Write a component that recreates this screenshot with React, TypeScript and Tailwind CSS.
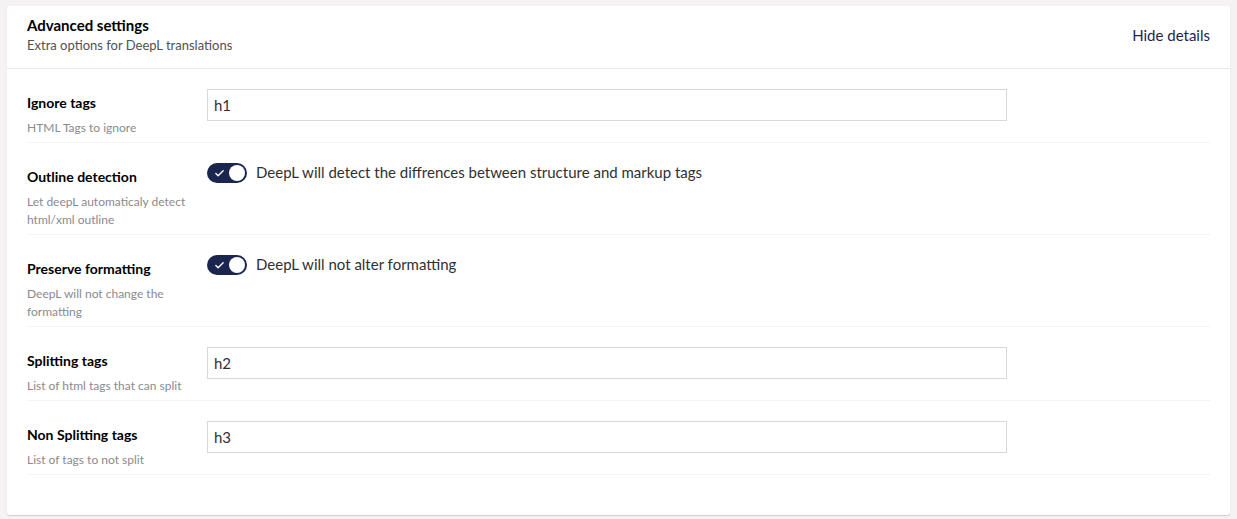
import { Check } from 'lucide-react';

type Row =
  | { label: string; desc: string; kind: 'input'; value: string }
  | { label: string; desc: string; kind: 'toggle'; text: string };

const rows: Row[] = [
  { label: 'Ignore tags', desc: 'HTML Tags to ignore', kind: 'input', value: 'h1' },
  {
    label: 'Outline detection',
    desc: 'Let deepL automaticaly detect html/xml outline',
    kind: 'toggle',
    text: 'DeepL will detect the diffrences between structure and markup tags',
  },
  {
    label: 'Preserve formatting',
    desc: 'DeepL will not change the formatting',
    kind: 'toggle',
    text: 'DeepL will not alter formatting',
  },
  { label: 'Splitting tags', desc: 'List of html tags that can split', kind: 'input', value: 'h2' },
  { label: 'Non Splitting tags', desc: 'List of tags to not split', kind: 'input', value: 'h3' },
];

function Toggle({ text }: { text: string }) {
  return (
    <div className="flex items-start gap-[9px]">
      <div className="relative h-[20px] w-[40px] shrink-0 rounded-full bg-[#1b264f]">
        <Check size={11} strokeWidth={3} className="absolute left-[7px] top-[4.5px] text-white" />
        <div className="absolute right-[2px] top-[2px] h-[16px] w-[16px] rounded-full bg-white" />
      </div>
      <span className="text-[15px] leading-[18px] text-[#303033]">{text}</span>
    </div>
  );
}

export default function App() {
  return (
    <div
      className="min-h-[519px] w-full bg-[#f4f2f2] pl-[7px] pr-[7px] pt-[6px] pb-[4px]"
      style={{ fontFamily: 'Lato, "Open Sans", sans-serif' }}
    >
      <div className="rounded-[3px] bg-white shadow-[0_1px_1px_rgba(0,0,0,0.16)] pb-[40px]">
        {/* Header */}
        <div className="flex items-center justify-between border-b border-[#e9e9eb] px-5 pt-[9px] pb-[13px]">
          <div>
            <div className="text-[15px] font-bold leading-[20px] text-[#000000]">Advanced settings</div>
            <div className="text-[13px] leading-[20px] text-[#515054]">Extra options for DeepL translations</div>
          </div>
          <div className="text-[15px] text-[#1b264f]">Hide details</div>
        </div>

        {/* Rows */}
        <div className="px-5">
          {rows.map((row) => (
            <div key={row.label} className="flex border-b border-[#f3f3f5] pt-5 pb-[5px]">
              <div className="w-[180px] shrink-0 pr-5 pt-1">
                <div className="text-[14px] font-bold leading-[20px] text-[#000000]">{row.label}</div>
                <div className="mt-[6px] text-[12px] leading-[18px] text-[#8a8a8e]">{row.desc}</div>
              </div>
              <div className="flex-1">
                {row.kind === 'input' ? (
                  <input
                    readOnly
                    value={row.value}
                    className="h-[32px] w-[800px] border border-[#d8d7d9] px-[6px] text-[15px] text-[#303033] outline-none"
                  />
                ) : (
                  <Toggle text={row.text} />
                )}
              </div>
            </div>
          ))}
        </div>
      </div>
    </div>
  );
}
